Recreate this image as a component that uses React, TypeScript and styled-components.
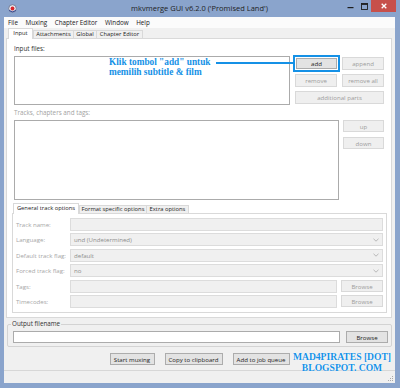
import React from 'react'
import styled, { createGlobalStyle } from 'styled-components'

const GlobalStyle = createGlobalStyle`
  html, body { margin: 0; padding: 0; background: #ffffff; }
  body { font-family: 'Open Sans', 'Liberation Sans', sans-serif; }
  * { box-sizing: border-box; }
`

const BLUE = '#1591e6'

const Frame = styled.div`
  width: 400px;
  height: 388px;
  background: #8aa4cc;
  display: flex;
  flex-direction: column;
  padding: 0 5px 5px 4px;
  overflow: hidden;
`

const TitleBar = styled.div`
  height: 18px;
  display: grid;
  grid-template-columns: 1fr auto 1fr;
  align-items: start;
`

const TitleText = styled.div`
  font-size: 7.5px;
  line-height: 16px;
  color: #1e1e1e;
  white-space: nowrap;
`

const AppIcon = styled.div`
  padding: 4px 0 0 4px;
  display: flex;
`

const Controls = styled.div`
  display: flex;
  justify-content: flex-end;
  align-items: flex-start;
  margin-right: -1px;
`

const CtrlButton = styled.div`
  width: 14px;
  height: 12px;
  display: flex;
  align-items: center;
  justify-content: center;
`

const CloseButton = styled.div`
  width: 25px;
  height: 12px;
  background: #c7504b;
  display: flex;
  align-items: center;
  justify-content: center;
`

const Client = styled.div`
  flex: 1;
  background: #f0f0f0;
  display: flex;
  flex-direction: column;
  position: relative;
`

const MenuBar = styled.div`
  height: 11px;
  background: #fbfbfb;
  display: flex;
  align-items: center;
  gap: 7.5px;
  padding-left: 4px;
  font-size: 6.3px;
  color: #1a1a1a;
`

const TabStrip = styled.div<{ $indent: number }>`
  height: 11px;
  display: flex;
  align-items: flex-end;
  padding-left: ${(p) => p.$indent}px;
  position: relative;
  z-index: 1;
`

const Tab = styled.div<{ $active?: boolean; $w: number }>`
  width: ${(p) => p.$w}px;
  height: ${(p) => (p.$active ? 11 : 9)}px;
  margin-right: ${(p) => (p.$active ? 0 : -1)}px;
  border: 1px solid #d9d9d9;
  border-bottom: ${(p) => (p.$active ? 'none' : '1px solid #d9d9d9')};
  background: ${(p) => (p.$active ? '#ffffff' : '#f0f0f0')};
  font-size: 5.8px;
  line-height: ${(p) => (p.$active ? 9 : 7)}px;
  text-align: center;
  color: #222;
  white-space: nowrap;
`

const InputPanel = styled.div`
  margin: -1px 3px 0 2px;
  height: 280px;
  background: #ffffff;
  border: 1px solid #d9d9d9;
  padding: 0 7px 0 7px;
  display: flex;
  flex-direction: column;
`

const SectionLabel = styled.div<{ $muted?: boolean }>`
  font-size: 6.3px;
  line-height: 10px;
  color: ${(p) => (p.$muted ? '#a3a3a3' : '#333333')};
  padding-top: ${(p) => (p.$muted ? 3 : 5)}px;
  margin-bottom: 2px;
`

const FilesRow = styled.div`
  height: 49px;
  display: flex;
  position: relative;
`

const ListBox = styled.div<{ $w?: number }>`
  ${(p) => (p.$w ? `width: ${p.$w}px;` : 'flex: 1;')}
  height: 100%;
  background: #ffffff;
  border: 1px solid #ababab;
`

const FileButtons = styled.div`
  margin-left: 5px;
  padding-top: 1px;
  display: grid;
  grid-template-columns: 42px 42px;
  grid-template-rows: 13px 13px 13px;
  column-gap: 5px;
  row-gap: 4px;
  align-content: start;
`

const Button = styled.div<{ $muted?: boolean; $w?: number; $h?: number; $span?: boolean; $mark?: boolean }>`
  ${(p) => (p.$w ? `width: ${p.$w}px;` : '')}
  height: ${(p) => p.$h ?? 13}px;
  ${(p) => (p.$span ? 'grid-column: 1 / span 2;' : '')}
  background: ${(p) => (p.$muted ? '#efefef' : '#e3e3e3')};
  border: 1px solid ${(p) => (p.$muted ? '#d9d9d9' : '#acacac')};
  color: ${(p) => (p.$muted ? '#9c9c9c' : '#222222')};
  font-size: 6.1px;
  display: flex;
  align-items: center;
  justify-content: center;
  white-space: nowrap;
  flex-shrink: 0;
  ${(p) => (p.$mark ? `outline: 2px solid ${BLUE}; outline-offset: 1px; margin: 1px 0 0 1px; height: 11px;` : '')}
`

const Annotation = styled.div`
  position: absolute;
  left: 95px;
  top: 1px;
  font-family: 'Liberation Serif', 'Times New Roman', serif;
  font-weight: bold;
  font-size: 9.3px;
  line-height: 10px;
  color: ${BLUE};
  white-space: nowrap;
`

const Pointer = styled.div`
  position: absolute;
  left: 202px;
  top: 6px;
  width: 77px;
  height: 2px;
  background: ${BLUE};
`

const TracksRow = styled.div`
  height: 80px;
  display: flex;
`

const SideButtons = styled.div`
  margin-left: 4px;
  display: flex;
  flex-direction: column;
  gap: 5px;
`

const SubTabs = styled(TabStrip)`
  margin: 3px 0 0 -2px;
`

const SubPanel = styled.div`
  margin: -1px -3px 0 -2px;
  height: 100px;
  border: 1px solid #d9d9d9;
  background: #ffffff;
  padding: 4px 3px 0 3px;
  display: flex;
  flex-direction: column;
  gap: 2.4px;
`

const FieldRow = styled.div`
  height: 13px;
  display: flex;
  align-items: center;
`

const FieldLabel = styled.div`
  width: 54px;
  font-size: 6.1px;
  color: #a6a6a6;
  white-space: nowrap;
  flex-shrink: 0;
`

const Field = styled.div<{ $white?: boolean }>`
  flex: 1;
  height: 100%;
  background: ${(p) => (p.$white ? '#ffffff' : '#f0f0f0')};
  border: 1px solid ${(p) => (p.$white ? '#ababab' : '#dcdcdc')};
  display: flex;
  align-items: center;
  justify-content: space-between;
  padding: 0 3px 0 3px;
  font-size: 6.1px;
  color: #8c8c8c;
`

const OutputGroup = styled.div`
  margin: 6px 3px 0 3px;
  height: 23px;
  border: 1px solid #d3d3d3;
  border-radius: 2px;
  position: relative;
  display: flex;
  padding: 6px 3px 0 5px;
  gap: 6px;
`

const Legend = styled.div`
  position: absolute;
  left: 3px;
  top: -5px;
  padding: 0 1px;
  background: #f0f0f0;
  font-size: 6.3px;
  line-height: 8px;
  color: #333;
`

const ActionRow = styled.div`
  margin-top: 6px;
  height: 12px;
  display: flex;
  justify-content: center;
  gap: 10px;
  position: relative;
`

const Watermark = styled.div`
  position: absolute;
  right: 2px;
  top: -2px;
  width: 102px;
  text-align: center;
  font-family: 'Liberation Serif', 'Times New Roman', serif;
  font-weight: bold;
  font-size: 9.6px;
  line-height: 11px;
  color: ${BLUE};
  text-shadow: 0 0 1px #fff, 0 0 1px #fff;
  white-space: nowrap;
`

const Separator = styled.div`
  margin-top: 5px;
  height: 1px;
  background: #d7d7d7;
`

const StatusBar = styled.div`
  height: 12px;
  display: flex;
  justify-content: flex-end;
  align-items: flex-end;
  padding: 0 1px 1px 0;
`

const Chevron = () => (
  <svg width="6" height="4" viewBox="0 0 6 4">
    <path d="M0.5 0.8 L3 3.2 L5.5 0.8" fill="none" stroke="#a8a8a8" strokeWidth="0.8" />
  </svg>
)

const fields: { label: string; value?: string; select?: boolean; browse?: boolean }[] = [
  { label: 'Track name:' },
  { label: 'Language:', value: 'und (Undetermined)', select: true },
  { label: 'Default track flag:', value: 'default', select: true },
  { label: 'Forced track flag:', value: 'no', select: true },
  { label: 'Tags:', browse: true },
  { label: 'Timecodes:', browse: true },
]

export default function App() {
  return (
    <>
      <GlobalStyle />
      <Frame>
        <TitleBar>
          <AppIcon>
            <svg width="9" height="9" viewBox="0 0 9 9">
              <circle cx="4.5" cy="4.5" r="3.8" fill="#e9e9ee" stroke="#6b6f86" strokeWidth="0.8" />
              <circle cx="4.5" cy="4.5" r="1.9" fill="#d8262b" />
              <path d="M1.2 6.5 Q4.5 9 7.8 6.5" fill="none" stroke="#2c3f8f" strokeWidth="1" />
            </svg>
          </AppIcon>
          <TitleText>mkvmerge GUI v6.2.0 ('Promised Land')</TitleText>
          <Controls>
            <CtrlButton>
              <svg width="7" height="7" viewBox="0 0 7 7">
                <rect x="0.5" y="4" width="6" height="1.2" fill="#1e1e1e" />
              </svg>
            </CtrlButton>
            <CtrlButton>
              <svg width="7" height="7" viewBox="0 0 7 7">
                <rect x="0.5" y="0.5" width="6" height="6" fill="none" stroke="#1e1e1e" strokeWidth="0.9" />
                <rect x="0.5" y="0.5" width="6" height="1.4" fill="#1e1e1e" />
              </svg>
            </CtrlButton>
            <CloseButton>
              <svg width="6" height="6" viewBox="0 0 6 6">
                <path d="M0.7 0.7 L5.3 5.3 M5.3 0.7 L0.7 5.3" stroke="#ffffff" strokeWidth="1.3" />
              </svg>
            </CloseButton>
          </Controls>
        </TitleBar>
        <Client>
          <MenuBar>
            <span>File</span>
            <span>Muxing</span>
            <span>Chapter Editor</span>
            <span>Window</span>
            <span>Help</span>
          </MenuBar>
          <TabStrip $indent={4}>
            <Tab $active $w={25}>Input</Tab>
            <Tab $w={41}>Attachments</Tab>
            <Tab $w={24}>Global</Tab>
            <Tab $w={47}>Chapter Editor</Tab>
          </TabStrip>
          <InputPanel>
            <SectionLabel>Input files:</SectionLabel>
            <FilesRow>
              <ListBox $w={276} />
              <FileButtons>
                <Button $mark>add</Button>
                <Button $muted>append</Button>
                <Button $muted>remove</Button>
                <Button $muted>remove all</Button>
                <Button $muted $span>additional parts</Button>
              </FileButtons>
              <Annotation>
                Klik tombol "add" untuk
                <br />
                memilih subtitle &amp; film
              </Annotation>
              <Pointer />
            </FilesRow>
            <SectionLabel $muted>Tracks, chapters and tags:</SectionLabel>
            <TracksRow>
              <ListBox />
              <SideButtons>
                <Button $muted $w={41} $h={12}>up</Button>
                <Button $muted $w={41} $h={12}>down</Button>
              </SideButtons>
            </TracksRow>
            <SubTabs $indent={1}>
              <Tab $active $w={66}>General track options</Tab>
              <Tab $w={68}>Format specific options</Tab>
              <Tab $w={43}>Extra options</Tab>
            </SubTabs>
            <SubPanel>
              {fields.map((f) => (
                <FieldRow key={f.label}>
                  <FieldLabel>{f.label}</FieldLabel>
                  <Field>
                    <span>{f.value ?? ''}</span>
                    {f.select && <Chevron />}
                  </Field>
                  {f.browse && (
                    <Button $muted $w={42} $h={12} style={{ marginLeft: 4 }}>
                      Browse
                    </Button>
                  )}
                </FieldRow>
              ))}
            </SubPanel>
          </InputPanel>
          <OutputGroup>
            <Legend>Output filename</Legend>
            <Field $white style={{ height: 12 }} />
            <Button $w={42} $h={12}>Browse</Button>
          </OutputGroup>
          <ActionRow>
            <Button $w={45} $h={12}>Start muxing</Button>
            <Button $w={58} $h={12}>Copy to clipboard</Button>
            <Button $w={57} $h={12}>Add to job queue</Button>
            <Watermark>
              MAD4PIRATES [DOT]
              <br />
              BLOGSPOT. COM
            </Watermark>
          </ActionRow>
          <Separator />
          <StatusBar>
            <svg width="6" height="6" viewBox="0 0 6 6">
              <rect x="4" y="0" width="1" height="1" fill="#a8a8a8" />
              <rect x="2" y="2" width="1" height="1" fill="#a8a8a8" />
              <rect x="4" y="2" width="1" height="1" fill="#a8a8a8" />
              <rect x="0" y="4" width="1" height="1" fill="#a8a8a8" />
              <rect x="2" y="4" width="1" height="1" fill="#a8a8a8" />
              <rect x="4" y="4" width="1" height="1" fill="#a8a8a8" />
            </svg>
          </StatusBar>
        </Client>
      </Frame>
    </>
  )
}
